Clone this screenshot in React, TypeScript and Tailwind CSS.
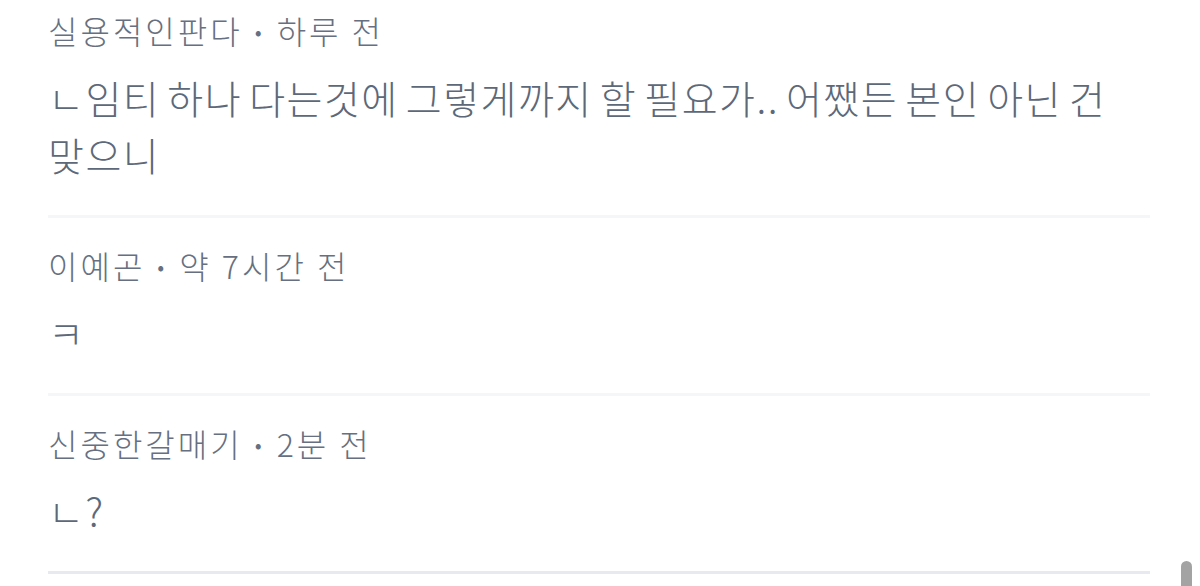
const comments = [
  { name: '실용적인판다', time: '하루 전', body: 'ㄴ임티 하나 다는것에 그렇게까지 할 필요가.. 어쨌든 본인 아닌 건 맞으니' },
  { name: '이예곤', time: '약 7시간 전', body: 'ㅋ' },
  { name: '신중한갈매기', time: '2분 전', body: 'ㄴ?' },
];

const App = () => {
  return (
    <div
      className="relative h-[586px] overflow-hidden bg-white"
      style={{ fontFamily: '"Noto Sans CJK KR", "Noto Sans", sans-serif' }}
    >
      <ul className="pl-[48px] pr-[50px]">
        {comments.map((c, idx) => {
          const last = idx === comments.length - 1;
          return (
            <li
              key={idx}
              className={`flex flex-col gap-[19px] pb-[32px] border-b-[3px] ${idx === 0 ? 'pt-[10px]' : 'pt-[27px]'} ${last ? 'border-[#e6eaf0]' : 'border-[#f5f6f8]'}`}
            >
              <div className="flex items-center text-[32px] leading-[40px] font-light tracking-[3px] text-[#667080]">
                <span>{c.name}</span>
                <span className="mx-[12px] text-[22px]">•</span>
                <span>{c.time}</span>
              </div>
              <p className="text-[39px] leading-[57px] font-light tracking-[1.5px] [word-spacing:-3px] break-keep text-[#5d6878]">
                {c.body}
              </p>
            </li>
          );
        })}
      </ul>
      <div className="absolute right-[8px] top-[561px] h-[40px] w-[11px] rounded-full bg-[#a3a3a3]" />
    </div>
  );
};

export default App;
